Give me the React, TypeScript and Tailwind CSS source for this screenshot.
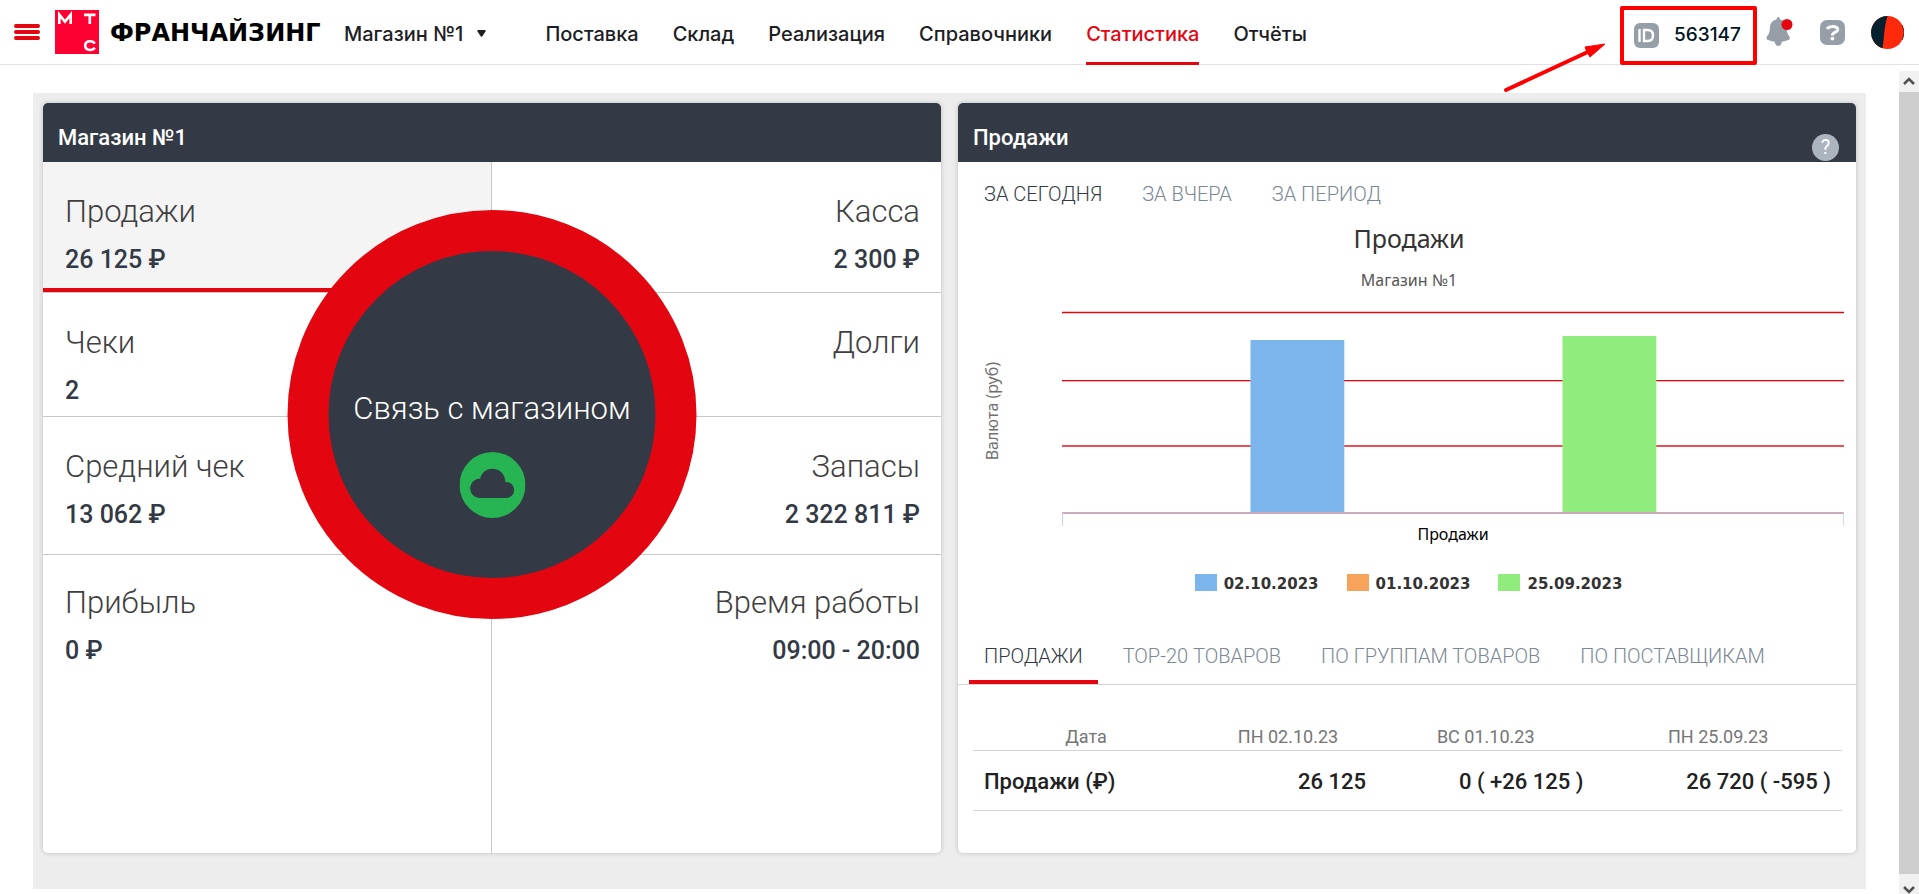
import clsx from "clsx";

const NAV = ["Поставка", "Склад", "Реализация", "Справочники", "Статистика", "Отчёты"];

const METRICS = [
  { title: "Продажи", value: "26 125 ₽", active: true },
  { title: "Касса", value: "2 300 ₽" },
  { title: "Чеки", value: "2" },
  { title: "Долги", value: "" },
  { title: "Средний чек", value: "13 062 ₽" },
  { title: "Запасы", value: "2 322 811 ₽" },
  { title: "Прибыль", value: "0 ₽" },
  { title: "Время работы", value: "09:00 - 20:00" },
];

const PERIODS = ["ЗА СЕГОДНЯ", "ЗА ВЧЕРА", "ЗА ПЕРИОД"];

const REPORTS = ["ПРОДАЖИ", "TOP-20 ТОВАРОВ", "ПО ГРУППАМ ТОВАРОВ", "ПО ПОСТАВЩИКАМ"];

const LEGEND = [
  { label: "02.10.2023", color: "bg-[#7cb5ec]" },
  { label: "01.10.2023", color: "bg-[#f7a35c]" },
  { label: "25.09.2023", color: "bg-[#90ed7d]" },
];

function Logo() {
  return (
    <svg viewBox="0 0 44 44" className="h-11 w-11 shrink-0" aria-label="МТС">
      <rect width="44" height="44" fill="#ff0032" />
      <g fill="none" stroke="#fff" strokeWidth="2.6">
        <path d="M4.3 14V4.6L10 11.6L15.7 4.6V14" />
        <path d="M29 4.9H40.5M34.8 4.9V14" />
        <path d="M39.8 33.6C38.8 31.9 37.2 31.2 35.2 31.2C32 31.2 30.2 33 30.2 35.6C30.2 38.2 32 40 35.2 40C37.2 40 38.8 39.3 39.8 37.6" />
      </g>
    </svg>
  );
}

function Header() {
  return (
    <header className="flex h-[65px] items-center border-b border-[#dfe1ec] pr-[15px] pl-[14px] font-['Inter',sans-serif]">
      <button aria-label="Меню" className="flex w-[26px] shrink-0 flex-col gap-[2px]">
        <span className="h-[4px] rounded-xs bg-[#e30611]" />
        <span className="h-[4px] rounded-xs bg-[#e30611]" />
        <span className="h-[4px] rounded-xs bg-[#e30611]" />
      </button>
      <a href="#" className="ml-[15px] flex items-center gap-[11px]">
        <Logo />
        <span className="w-[209px] pt-[2px] font-['DejaVu_Sans',sans-serif] text-[24px] leading-7 font-bold text-black">
          ФРАНЧАЙЗИНГ
        </span>
      </a>
      <button className="ml-[25px] flex items-center gap-[14px] pt-[3px] text-[20px] leading-6 font-medium whitespace-nowrap">
        Магазин №1
        <svg viewBox="0 0 9 7" className="h-[7px] w-[9px]" aria-hidden="true">
          <path d="M1 0H8Q9 0 8.5 1.5L5.5 6Q4.5 7.5 3.5 6L.5 1.5Q0 0 1 0Z" fill="#1d2023" />
        </svg>
      </button>
      <nav className="ml-[59px] flex h-[65px] shrink-0 gap-[34px] self-start">
        {NAV.map((item) => (
          <a
            key={item}
            href="#"
            className={clsx(
              "flex items-center border-b-3 pt-[6px] text-[20px] font-medium",
              item === "Статистика" ? "border-[#e30611] text-[#e30611]" : "border-transparent",
            )}
          >
            {item}
          </a>
        ))}
      </nav>

      <div className="ml-auto flex shrink-0 items-center">
        <div className="relative mt-[6px] flex h-[59px] w-[137px] items-center gap-[15px] rounded-xs border-4 border-[#ff0000] pl-[10px]">
          {/* Pointer to the store ID */}
          <svg viewBox="0 0 106 54" className="absolute top-[30px] -left-[121px] h-[54px] w-[106px]" aria-hidden="true">
            <path d="M3 50L88 10.5" stroke="#ff0000" strokeWidth="4" strokeLinecap="round" />
            <path d="M82 7L102 4L87 17L84 12Z" fill="#ff0000" stroke="#ff0000" />
          </svg>
          <svg viewBox="0 0 25 25" className="h-[25px] w-[25px]" aria-hidden="true">
            <rect width="25" height="25" rx="6" fill="#969fa8" />
            <path d="M5.5 6V19M10 7V18H13.5C17 18 19 16 19 12.5C19 9 17 7 13.5 7Z" fill="none" stroke="#fff" strokeWidth="2.4" />
          </svg>
          <span className="text-[19px] leading-6 font-medium text-[#001424]">563147</span>
        </div>
        <button aria-label="Уведомления" className="ml-[9px]">
          <svg viewBox="0 0 28 30" className="h-[30px] w-[28px]">
            <path d="M12.3 0C13.3 0 13.9 1 14 2.4C18.5 3.3 20.5 6.5 20.7 11C20.9 15.5 21.7 17 23.4 19.5C24.2 20.9 23.8 22.4 22.4 22.9C20.5 23.7 18 24.3 16 24.5C15.6 27.2 14.4 29 12.3 29C10.2 29 9 27.2 8.6 24.5C6.5 24.3 4 23.7 2 22.9C.6 22.4 .2 20.9 1 19.5C2.8 17 3.7 15.5 3.9 11C4.1 6.5 6 3.3 10.5 2.4C10.7 1 11.3 0 12.3 0Z" fill="#969fa8" />
            <circle cx="21" cy="7.5" r="5.5" fill="#e30611" />
          </svg>
        </button>
        <button aria-label="Помощь" className="ml-[26px]">
          <svg viewBox="0 0 25 25" className="h-[25px] w-[25px]">
            <rect width="25" height="25" rx="7" fill="#969fa8" />
            <path d="M6.8 8.7C8.5 7 10.2 6.6 12.7 6.6C15.7 6.6 17.7 7.8 17.7 9.7C17.7 12.3 12.4 12 12.4 15.4" fill="none" stroke="#fff" strokeWidth="3" />
            <circle cx="12.4" cy="18.6" r="1.9" fill="#fff" />
          </svg>
        </button>
        <button aria-label="Профиль" className="ml-[26px]">
          <svg viewBox="0 0 33 33" className="h-[33px] w-[33px]">
            <circle cx="16.5" cy="16.5" r="16.5" fill="#ff2a0c" />
            <path d="M16.5 0A16.5 16.5 0 0 0 11.5 32.2C13.5 21 12.5 13 16.5 0Z" fill="#05202f" />
            <path d="M31 9A16.5 16.5 0 0 1 31 24" fill="none" stroke="#7a2320" />
          </svg>
        </button>
      </div>
    </header>
  );
}

function StoreCard() {
  return (
    <section className="flex flex-col overflow-hidden rounded-[5px] bg-white shadow-[0_0_5px_rgba(0,0,0,0.2)]">
      <h2 className="h-[59px] bg-[#333a45] px-[15px] pt-[21px] text-[22px] leading-7 font-medium text-white">Магазин №1</h2>
      <div className="relative grid flex-1 grid-cols-2 grid-rows-[131px_124px_138px_1fr]">
        {METRICS.map((metric, i) => (
          <button
            key={metric.title}
            className={clsx(
              "flex flex-col border-[#c8c8c8]",
              i % 2 === 0 ? "border-r text-left" : "text-right",
              i < 6 && "border-b",
              metric.active && "bg-[#f4f4f4]",
            )}
          >
            <span
              className={clsx(
                "w-full flex-1 pr-[21px] pl-[22px]",
                i < 6 ? "pt-[31px]" : "pt-[29px]",
                metric.active && "border-b-4 border-[#e30611]",
              )}
            >
              <span className="block text-[31px] leading-[38px] font-light text-[#3f3f3f]">{metric.title}</span>
              <span className="mt-[14px] block text-[25px] leading-[30px] font-medium text-[#333a45]">{metric.value}</span>
            </span>
          </button>
        ))}
        <button className="absolute top-[48px] left-1/2 flex h-[409px] w-[409px] -translate-x-1/2 flex-col items-center rounded-full border-[41px] border-[#e30611] bg-[#333a45] pt-[139px]">
          <span className="text-[31px] leading-[38px] font-light whitespace-nowrap text-white">Связь с магазином</span>
          <svg viewBox="0 0 66 66" className="mt-6 h-[66px] w-[66px] shrink-0" aria-hidden="true">
            <circle cx="33" cy="33" r="33" fill="#26b552" />
            <path d="M20 46A9.7 9.7 0 0 1 20.7 26.6C22.5 20 27 16.7 33 16.7C40 16.7 45.8 22 45.8 30A8 8 0 1 1 47.5 46Z" fill="#333a45" />
          </svg>
        </button>
      </div>
    </section>
  );
}

function SalesChart() {
  return (
    <figure className="mt-[17px] font-['Noto_Sans',sans-serif]">
      <div className="pl-[4px] text-center">
        <h3 className="text-[25px] leading-[30px] text-[#333333]">Продажи</h3>
        <p className="mt-[17px] text-[16px] leading-5 text-[#555555]">Магазин №1</p>
      </div>
      <div className="mt-3 flex pr-[12px] pl-[24px]">
        <span className="mt-[60px] w-5 rotate-180 self-start text-[16px] leading-5 whitespace-nowrap text-[#707070] [writing-mode:vertical-rl]">
          Валюта (руб)
        </span>
        <svg className="ml-[60px] h-[224px] min-w-0 flex-1" aria-label="Продажи по дням">
          <g fill="#e30611">
            <rect y="9" width="100%" height="3" opacity="0.25" />
            <rect y="10" width="100%" height="1" />
            <rect y="78" width="100%" height="1" />
            <rect y="79" width="100%" height="1" opacity="0.3" />
            <rect y="143" width="100%" height="2" opacity="0.7" />
          </g>
          <rect x="24.1%" y="38" width="12%" height="172" fill="#7cb5ec" />
          <rect x="64%" y="34" width="12%" height="176" fill="#90ed7d" />
          <rect y="210" width="100%" height="2" fill="#ccabba" />
          <rect y="210" width="1" height="14" fill="#c0d0e0" />
          <rect x="99.9%" y="210" width="1" height="14" fill="#c0d0e0" />
        </svg>
      </div>
      <p className="pl-[92px] text-center text-[16px] leading-4 text-black">Продажи</p>
      <figcaption className="mt-8 flex justify-center gap-[28px] pl-[3px]">
        {LEGEND.map((item) => (
          <span
            key={item.label}
            className="flex items-center gap-[7px] font-['DejaVu_Sans',sans-serif] text-[15px] leading-5 font-bold text-[#333333]"
          >
            <span className={clsx("mb-[3px] h-[17px] w-[22px]", item.color)} />
            {item.label}
          </span>
        ))}
      </figcaption>
    </figure>
  );
}

function SalesTable() {
  return (
    <div className="pt-[40px] pr-[14px] pb-[42px] pl-[15px]">
      <table className="w-full table-fixed">
        <thead>
          <tr className="border-b border-[#d5d5d5] text-[18px] leading-6 text-[#757575]">
            <th className="w-[26%] pb-px font-normal">Дата</th>
            <th className="w-[20.5%] pb-px font-normal">ПН 02.10.23</th>
            <th className="w-[25%] pb-px font-normal">ВС 01.10.23</th>
            <th className="pb-px font-normal">ПН 25.09.23</th>
          </tr>
        </thead>
        <tbody>
          <tr className="h-[60px] border-b border-[#d5d5d5] text-right text-[22px] leading-7 font-medium text-[#212121]">
            <th className="px-[11px] pt-[2px] text-left font-medium">Продажи (₽)</th>
            <td className="px-[11px] pt-[2px]">26 125</td>
            <td className="px-[11px] pt-[2px]">0 ( +26 125 )</td>
            <td className="px-[11px] pt-[2px]">26 720 ( -595 )</td>
          </tr>
        </tbody>
      </table>
    </div>
  );
}

function SalesCard() {
  return (
    <section className="overflow-hidden rounded-[5px] bg-white shadow-[0_0_5px_rgba(0,0,0,0.2)]">
      <div className="flex h-[59px] items-end justify-between bg-[#333a45] pr-[17px] pb-px pl-[15px]">
        <h2 className="pb-[9px] text-[22px] leading-7 font-medium text-white">Продажи</h2>
        <button aria-label="Справка" className="h-[27px] w-[27px] rounded-full bg-[#abb5bf] text-[20px] leading-[27px] text-white">
          ?
        </button>
      </div>
      <div className="flex gap-[40px] px-[26px] pt-5">
        {PERIODS.map((period, i) => (
          <button key={period} className={clsx("text-[20px] leading-6 font-light", i === 0 ? "text-[#333a45]" : "text-[#7b8794]")}>
            {period}
          </button>
        ))}
      </div>
      <SalesChart />
      <div className="mt-[50px] flex gap-[10px] border-b border-[#d5d5d5] px-[11px]">
        {REPORTS.map((report, i) => (
          <button
            key={report}
            className={clsx(
              "border-b-4 px-[15px] pb-3 text-[20px] leading-6 font-light",
              i === 0 ? "border-[#e30611] text-[#333a45]" : "border-transparent text-[#7b8794]",
            )}
          >
            {report}
          </button>
        ))}
      </div>
      <SalesTable />
    </section>
  );
}

function Scrollbar() {
  return (
    <div className="mt-[6px] flex w-5 shrink-0 flex-col bg-[#cdcdcd]" aria-hidden="true">
      <div className="flex h-[21px] items-center justify-center bg-[#f1f1f1] pb-[2px]">
        <svg viewBox="0 0 12 8" className="h-2 w-3">
          <path d="M1 7L6 2L11 7" fill="none" stroke="#505050" strokeWidth="2.5" />
        </svg>
      </div>
      <div className="flex-1" />
      <div className="flex h-5 items-end justify-center bg-[#f1f1f1]">
        <svg viewBox="0 0 12 8" className="h-2 w-3">
          <path d="M1 1L6 6L11 1" fill="none" stroke="#505050" strokeWidth="2.5" />
        </svg>
      </div>
    </div>
  );
}

export default function App() {
  return (
    <div className="flex min-h-screen flex-col bg-white font-['Roboto',sans-serif] text-[#1d2023]">
      <Header />
      <div className="flex flex-1">
        <main className="min-w-0 flex-1 px-[33px] pt-[28px] pb-[5px]">
          <div className="grid grid-cols-2 gap-[17px] bg-[#ededed] px-[10px] pt-[10px] pb-[36px]">
            <StoreCard />
            <SalesCard />
          </div>
        </main>
        <Scrollbar />
      </div>
    </div>
  );
}
